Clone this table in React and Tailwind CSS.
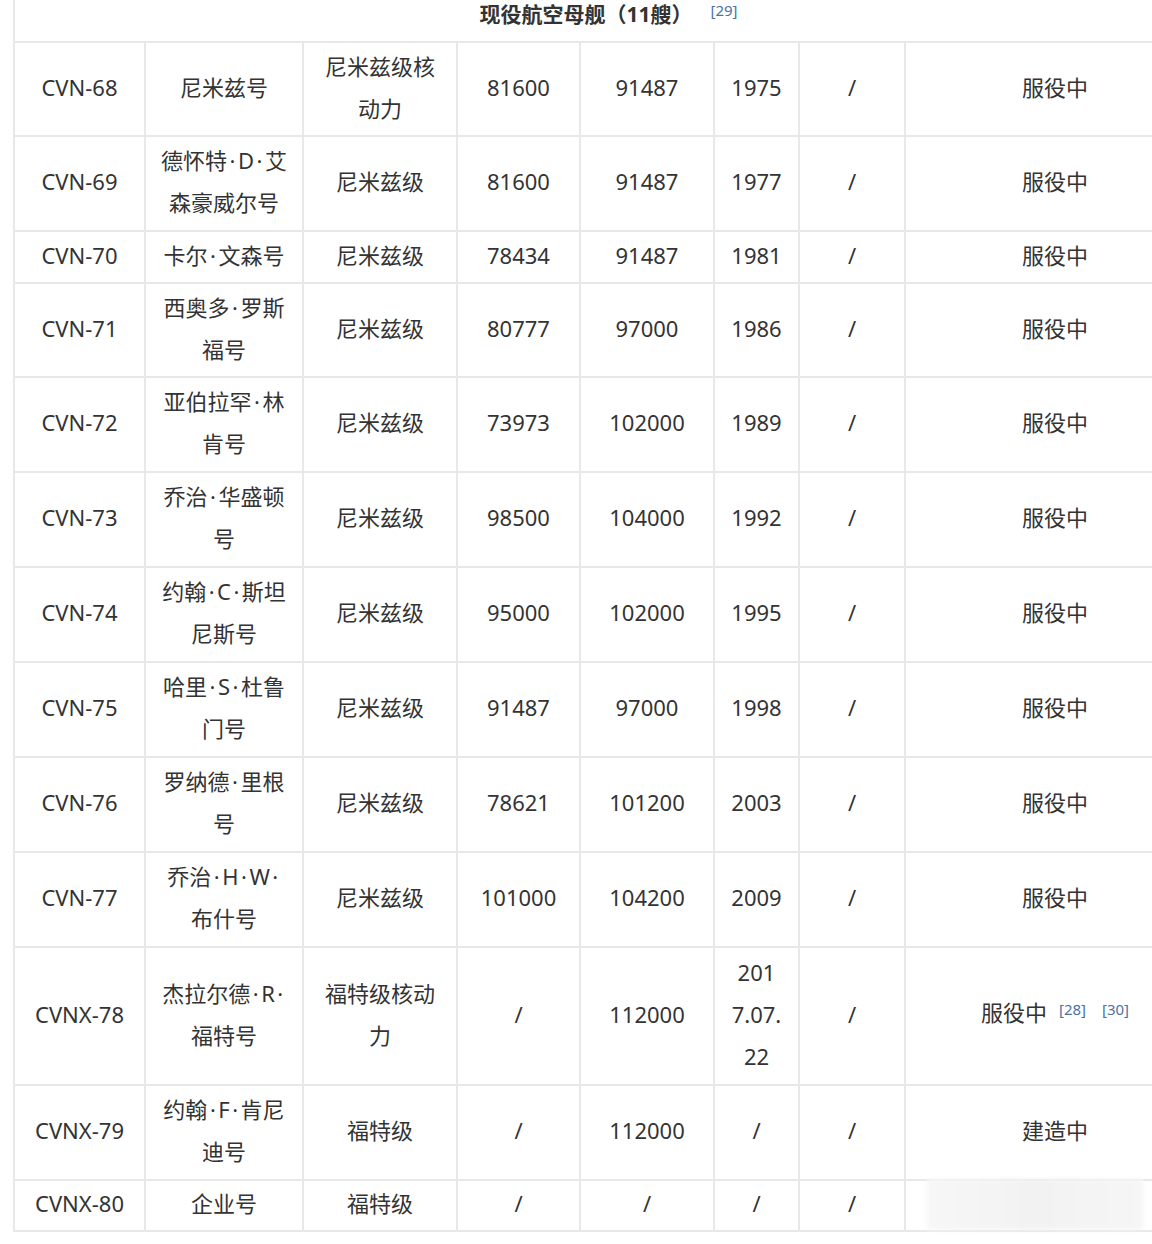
import React from "react";

const COLS = "grid-cols-[131px_158px_154px_123px_134px_85px_106px_298px]";

const rows = [
  { h: "h-[94px]", c: ["CVN-68", "尼米兹号", ["尼米兹级核", "动力"], "81600", "91487", "1975", "/", "服役中"] },
  { h: "h-[95px]", c: ["CVN-69", ["德怀特·D·艾", "森豪威尔号"], "尼米兹级", "81600", "91487", "1977", "/", "服役中"] },
  { h: "h-[52px]", c: ["CVN-70", "卡尔·文森号", "尼米兹级", "78434", "91487", "1981", "/", "服役中"] },
  { h: "h-[94px]", c: ["CVN-71", ["西奥多·罗斯", "福号"], "尼米兹级", "80777", "97000", "1986", "/", "服役中"] },
  { h: "h-[95px]", c: ["CVN-72", ["亚伯拉罕·林", "肯号"], "尼米兹级", "73973", "102000", "1989", "/", "服役中"] },
  { h: "h-[95px]", c: ["CVN-73", ["乔治·华盛顿", "号"], "尼米兹级", "98500", "104000", "1992", "/", "服役中"] },
  { h: "h-[95px]", c: ["CVN-74", ["约翰·C·斯坦", "尼斯号"], "尼米兹级", "95000", "102000", "1995", "/", "服役中"] },
  { h: "h-[95px]", c: ["CVN-75", ["哈里·S·杜鲁", "门号"], "尼米兹级", "91487", "97000", "1998", "/", "服役中"] },
  { h: "h-[95px]", c: ["CVN-76", ["罗纳德·里根", "号"], "尼米兹级", "78621", "101200", "2003", "/", "服役中"] },
  { h: "h-[95px]", c: ["CVN-77", ["乔治·H·W·", "布什号"], "尼米兹级", "101000", "104200", "2009", "/", "服役中"] },
  { h: "h-[138px]", c: ["CVNX-78", ["杰拉尔德·R·", "福特号"], ["福特级核动", "力"], "/", "112000", ["201", "7.07.", "22"], "/", "REF"] },
  { h: "h-[95px]", c: ["CVNX-79", ["约翰·F·肯尼", "迪号"], "福特级", "/", "112000", "/", "/", "建造中"] },
  { h: "h-[51px]", c: ["CVNX-80", "企业号", "福特级", "/", "/", "/", "/", "BLUR"] },
];

function Line({ text }) {
  const parts = text.split("·");
  return (
    <>
      {parts.map((p, i) => (
        <React.Fragment key={i}>
          {i > 0 && <span className="mx-[2.5px]">·</span>}
          {p}
        </React.Fragment>
      ))}
    </>
  );
}

function Ref({ n, gap }) {
  return <span className={"relative -top-[6px] text-[15px] text-[#4a72a6] " + gap}>[{n}]</span>;
}

function Cell({ v, last }) {
  let content;
  if (v === "REF") {
    content = (
      <span>
        服役中
        <Ref n="28" gap="ml-[12px]" />
        <Ref n="30" gap="ml-[16px]" />
      </span>
    );
  } else if (v === "BLUR") {
    content = (
      <div className="absolute left-[21px] right-[61px] -top-[2px] bottom-0 bg-gradient-to-r from-[#f7f7f7] via-[#f2f2f2] to-[#f6f6f6] blur-[2px]" />
    );
  } else {
    const lines = Array.isArray(v) ? v : [v];
    content = (
      <span>
        {lines.map((line, i) => (
          <React.Fragment key={i}>
            {i > 0 && <br />}
            <Line text={line} />
          </React.Fragment>
        ))}
      </span>
    );
  }
  return (
    <div
      className={
        "relative flex items-center justify-center text-center pb-[5px] " +
        (last ? "" : "border-r-2 border-[#e8e8e8]")
      }
    >
      {content}
    </div>
  );
}

export default function App() {
  return (
    <div
      className="w-[1152px] h-[1244px] overflow-hidden bg-white text-[#333333] text-[22px] leading-[42px] font-normal"
      style={{ fontFamily: '"Noto Sans", "Noto Sans CJK SC", sans-serif' }}
    >
      <div className="ml-[13px] w-[1191px] border-l-2 border-r-2 border-[#e8e8e8]">
        <div className="h-[43px] border-b-2 border-[#e8e8e8] flex justify-center">
          <div className="leading-[28px] font-bold text-[21px] text-[#333333]">
            现役航空母舰（11艘）
            <Ref n="29" gap="ml-[18px] font-normal" />
          </div>
        </div>
        {rows.map((r, i) => (
          <div key={i} className={"grid border-b-2 border-[#e8e8e8] " + COLS + " " + r.h}>
            {r.c.map((v, j) => (
              <Cell key={j} v={v} last={j === r.c.length - 1} />
            ))}
          </div>
        ))}
      </div>
    </div>
  );
}
